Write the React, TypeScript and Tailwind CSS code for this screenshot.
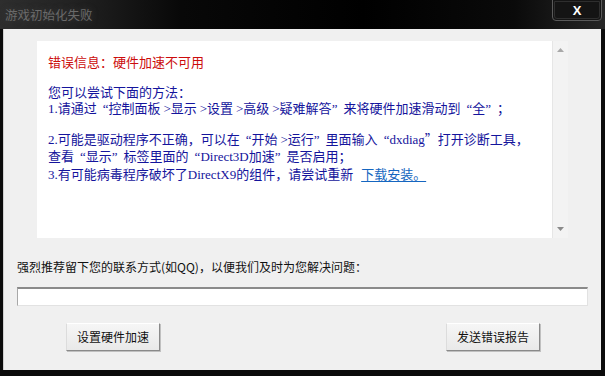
import React from "react";

const cjk = "font-['Noto_Sans_CJK_SC','Noto_Sans',sans-serif]";
const Lat = ({ children }: { children: React.ReactNode }) => (
  <span className="font-['Liberation_Serif','Noto_Sans_CJK_SC',serif]">{children}</span>
);
const QO = () => <span className="pl-[6px] font-['Liberation_Serif',serif]">“</span>;
const QC = () => <span className="pr-[6px] font-['Liberation_Serif',serif]">”</span>;

export default function App() {
  return (
    <div className={`w-[605px] h-[376px] bg-[#0b0b0b] flex flex-col overflow-hidden ${cjk}`}>
      {/* title bar */}
      <div className="h-[29px] flex justify-between items-start bg-[linear-gradient(90deg,#2e2e2e_0%,#222_12%,#080808_30%,#000_60%,#0a0a0a_85%,#262626_100%)] shrink-0">
        <span className="self-center pl-[5px] mt-[1px] text-[12.5px] leading-[16px] text-[#6a6a6a] [text-shadow:0_0_6px_#3c3c3c]">
          游戏初始化失败
        </span>
        <div className="mr-[3px] -mt-px w-[50px] h-[22px] border border-[#5a5a5a] rounded-b-[4px] p-px bg-[#141414]">
          <div className="w-full h-full border border-[#2e2e2e] rounded-b-[3px] flex items-center justify-center">
            <span className="text-white font-bold text-[13px] leading-none font-['Liberation_Sans',sans-serif]">X</span>
          </div>
        </div>
      </div>

      {/* client area */}
      <div className="ml-[3px] mr-[4px] mb-[6px] flex-1 bg-[#f0f0f0] border-l border-[#cfcfcf] flex flex-col">
        <div className="mt-[12px] ml-[33px] flex">
          <div className="w-[515px] h-[197px] bg-white pl-[11px] pt-[13px] text-[13px] leading-[16.5px]">
            <div className="text-[#cc0c0c]">错误信息：硬件加速不可用</div>
            <div className="mt-[13px] text-[#14149c]">
              <div>您可以尝试下面的方法：</div>
              <div>
                <Lat>1.</Lat>请通过<QO />控制面板 <Lat>&gt;</Lat>显示 <Lat>&gt;</Lat>设置 <Lat>&gt;</Lat>高级 <Lat>&gt;</Lat>疑难解答<QC />来将硬件加速滑动到<QO />全<QC />；
              </div>
              <div className="mt-[13px]">
                <Lat>2.</Lat>可能是驱动程序不正确，可以在<QO />开始 <Lat>&gt;</Lat>运行<QC />里面输入<QO /><Lat>dxdiag</Lat>”打开诊断工具，
              </div>
              <div>
                查看<QO />显示<QC />标签里面的<QO /><Lat>Direct3D</Lat>加速<QC />是否启用；
              </div>
              <div>
                <Lat>3.</Lat>有可能病毒程序破坏了<Lat>DirectX9</Lat>的组件，请尝试重新
                <span className="ml-[8px] text-[#1566c0] underline underline-offset-2">下载安装。</span>
              </div>
            </div>
          </div>
          <div className="w-[16px] h-[197px] bg-[#f3f3f3] border-l border-[#e6e6e6] flex flex-col items-center justify-between py-[7px]">
            <svg width="7" height="4" viewBox="0 0 7 4"><path d="M3.5 0 L7 4 L0 4 Z" fill="#a8a8a8" /></svg>
            <svg width="7" height="4" viewBox="0 0 7 4"><path d="M0 0 L7 0 L3.5 4 Z" fill="#8a8a8a" /></svg>
          </div>
        </div>

        <div className="mt-[21px] pl-[13px] text-[12px] leading-[16px] text-[#111]">
          强烈推荐留下您的联系方式(如QQ)，以便我们及时为您解决问题：
        </div>

        <div className="mt-[12px] ml-[13px] w-[571px] h-[19px] bg-white border-t-2 border-l border-r border-b border-t-[#8a8a8a] border-l-[#a8a8a8] border-r-[#e2e2e2] border-b-[#e2e2e2]" />

        <div className="mt-[17px] pl-[62px] pr-[61px] flex justify-between">
          <button className="w-[94px] h-[28px] bg-[linear-gradient(#f6f6f6,#e9e9e9)] border border-t-white border-l-[#dcdcdc] border-r-[#8a8a8a] border-b-[#8a8a8a] shadow-[1px_1px_0_#c0c0c0] text-[12px] leading-[16px] text-[#111]">
            设置硬件加速
          </button>
          <button className="w-[94px] h-[28px] bg-[linear-gradient(#f6f6f6,#e9e9e9)] border border-t-white border-l-[#dcdcdc] border-r-[#8a8a8a] border-b-[#8a8a8a] shadow-[1px_1px_0_#c0c0c0] text-[12px] leading-[16px] text-[#111]">
            发送错误报告
          </button>
        </div>
      </div>
    </div>
  );
}
